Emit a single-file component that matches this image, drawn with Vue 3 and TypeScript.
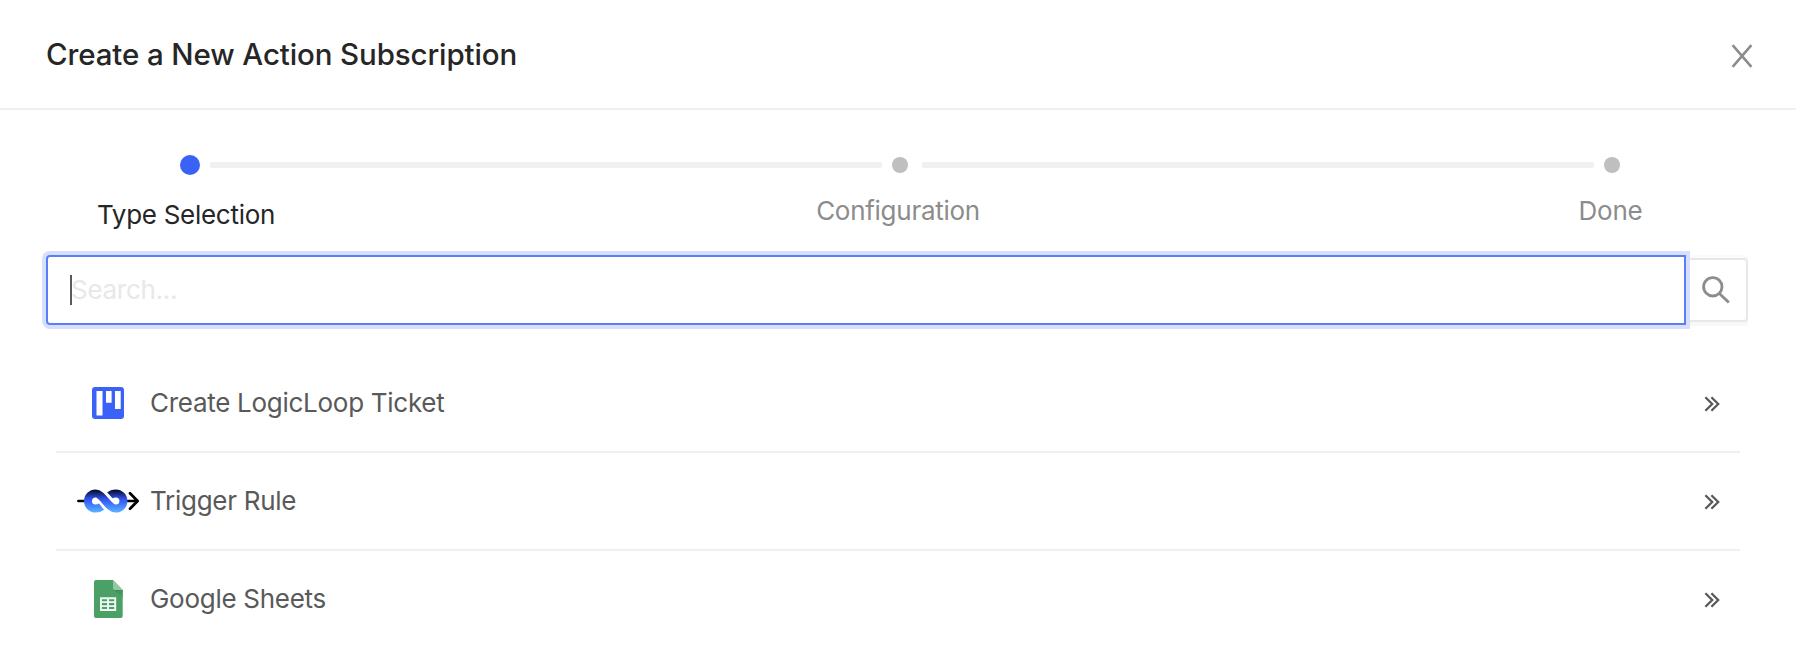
<script setup lang="ts">
import { ref } from 'vue'

interface Step {
  title: string
  key: string
}

interface ActionType {
  label: string
  icon: 'board' | 'loop' | 'sheet'
}

const steps: Step[] = [
  { title: 'Type Selection', key: 'type' },
  { title: 'Configuration', key: 'config' },
  { title: 'Done', key: 'done' },
]
const current = ref(0)

const actions: ActionType[] = [
  { label: 'Create LogicLoop Ticket', icon: 'board' },
  { label: 'Trigger Rule', icon: 'loop' },
  { label: 'Google Sheets', icon: 'sheet' },
]
</script>

<template>
  <div class="modal">
    <header class="header">
      <h1 class="title">Create a New Action Subscription</h1>
      <button class="close" aria-label="Close">
        <svg width="22" height="24" viewBox="0 0 22 24"><path d="M1.6 1.2 20.4 22.8M20.4 1.2 1.6 22.8" /></svg>
      </button>
    </header>

    <div class="steps">
      <div v-for="(s, i) in steps" :key="s.key" class="step" :class="[s.key, { active: i === current }]">
        <div class="rail">
          <span class="dot"></span>
          <span v-if="i < steps.length - 1" class="track"></span>
        </div>
        <div class="label"><span>{{ s.title }}</span></div>
      </div>
    </div>

    <div class="search">
      <div class="field">
        <span class="caret"></span>
        <span class="placeholder">Search...</span>
      </div>
      <button class="go" aria-label="Search">
        <svg width="28" height="28" viewBox="0 0 28 28"><circle cx="10.8" cy="10.8" r="9.2" /><path d="M17.4 17.4 26.8 26.6" /></svg>
      </button>
    </div>

    <ul class="list">
      <li v-for="a in actions" :key="a.label" class="row">
        <span class="icon">
          <svg v-if="a.icon === 'board'" width="32" height="32" viewBox="0 0 32 32">
            <rect width="32" height="32" rx="3.2" fill="#3a62f6" />
            <path d="M4.5 4h6v24.5h-6zM14 4h5.6v11.8H14zM23 4h5.7v18H23z" fill="#fff" />
          </svg>
          <svg v-else-if="a.icon === 'loop'" width="62" height="24" viewBox="0 0 62 24">
            <defs>
              <linearGradient id="loopFill" gradientUnits="userSpaceOnUse" x1="0" y1="0" x2="0" y2="24">
                <stop offset="0.04" stop-color="#060a2c" />
                <stop offset="0.4" stop-color="#2f50e6" />
                <stop offset="0.62" stop-color="#3f74fb" />
                <stop offset="1" stop-color="#5cb8ff" />
              </linearGradient>
            </defs>
            <path d="M1.4 12H8M51 12h9.2M53 4.2l7.6 7.8-7.6 7.8" fill="none" stroke="#000" stroke-width="2.7" stroke-linecap="round" stroke-linejoin="round" />
            <path d="M24.5 17.6C22.6 19.2 20.8 19.6 18.6 19.6A7.6 7.6 0 1 1 18.6 4.4C25.7 4.4 31.2 19.6 38.8 19.6A7.6 7.6 0 1 0 38.8 4.4C36.5 4.4 34.6 5 32.8 6.6" fill="none" stroke="url(#loopFill)" stroke-width="8" />
            <path d="M20 11.2 28 20.5M29.6 3.8l7.2 7.6" fill="none" stroke="#fff" stroke-width="1" />
          </svg>
          <svg v-else width="29" height="38" viewBox="0 0 29 38">
            <defs>
              <linearGradient id="fold" x1="0" y1="0" x2="0.6" y2="1">
                <stop offset="0" stop-color="#388755" />
                <stop offset="1" stop-color="#4b9f65" />
              </linearGradient>
            </defs>
            <path d="M2 0h17l9.7 10v26a2 2 0 0 1-2 2H2a2 2 0 0 1-2-2V2a2 2 0 0 1 2-2z" fill="#4ba165" />
            <path d="m19.8 9.5 8.9 8.8V10z" fill="url(#fold)" />
            <path d="M19 0v8a2 2 0 0 0 2 2h7.7z" fill="#93c7a4" />
            <path d="M6 17.2h16.2V31H6zM7.9 19.2v2.1h5.2v-2.1zM15 19.2v2.1h5.2v-2.1zM7.9 23v2.2h5.2V23zM15 23v2.2h5.2V23zM7.9 26.9V29h5.2v-2.1zM15 26.9V29h5.2v-2.1z" fill="#f1f8f3" fill-rule="evenodd" />
          </svg>
        </span>
        <span class="name">{{ a.label }}</span>
        <svg class="more" width="16" height="16" viewBox="0 0 16 16"><path d="m1.4 1.2 6.8 6.8-6.8 6.8M7.4 1.2 14.2 8l-6.8 6.8" /></svg>
      </li>
    </ul>
  </div>
</template>

<style>
body {
  background: #fff;
}
</style>

<style scoped>
.modal {
  box-sizing: border-box;
  height: 652px;
  overflow: hidden;
  background: #fff;
  font-family: Inter, 'Liberation Sans', sans-serif;
  font-size: 26px;
  letter-spacing: -0.28px;
  color: #595959;
}
button {
  padding: 0;
  background: none;
  border: 0;
}
svg {
  display: block;
}
.header {
  box-sizing: border-box;
  height: 110px;
  padding: 0 43px 0 46px;
  border-bottom: 2px solid #f0f0f0;
  display: flex;
  align-items: center;
  justify-content: space-between;
}
.title {
  margin: 0;
  font-size: 29.5px;
  line-height: 44px;
  font-weight: 500;
  letter-spacing: -0.12px;
  color: #262626;
}
.close {
  margin-top: 4px;
}
.close path {
  fill: none;
  stroke: #8c8c8c;
  stroke-width: 2.6;
}
.steps {
  display: flex;
  height: 141px;
  padding: 45px 0 0 90px;
  box-sizing: border-box;
}
.step {
  width: 711px;
  flex: none;
}
.step.type {
  width: 710px;
}
.step.done {
  width: 200px;
}
.rail {
  display: flex;
  align-items: center;
  height: 20px;
  padding-left: 92px;
}
.step.active .rail {
  padding-left: 90px;
}
.step.done .rail {
  padding-left: 93px;
}
.dot {
  flex: none;
  width: 16px;
  height: 16px;
  border-radius: 50%;
  background: #bfbfbf;
}
.active .dot {
  width: 20px;
  height: 20px;
  background: #3a62f6;
}
.track {
  flex: none;
  width: 672px;
  height: 6px;
  margin-left: 14px;
  border-radius: 2px;
  background: #f0f0f0;
}
.active .track {
  margin-left: 10px;
}
.label {
  width: 196px;
  margin-top: 16px;
  line-height: 40px;
  text-align: center;
  color: #8c8c8c;
  white-space: nowrap;
}
.done .label {
  width: 199px;
}
.active .label {
  margin-top: 20px;
  width: 192px;
  color: #262626;
}
.search {
  display: flex;
  align-items: center;
  height: 78px;
  padding: 0 48px 0 46px;
}
.field {
  position: relative;
  z-index: 1;
  box-sizing: border-box;
  width: 1640px;
  height: 70px;
  padding-left: 22px;
  border: 2px solid #597ef7;
  border-radius: 4px 0 0 4px;
  box-shadow: 0 0 0 4px #d8dffd;
  background: #fff;
  display: flex;
  align-items: center;
}
.caret {
  width: 2px;
  height: 30px;
  background: #595959;
}
.placeholder {
  margin-left: -1px;
  padding-bottom: 2px;
  color: #e8e8e8;
}
.go {
  box-sizing: border-box;
  width: 64px;
  height: 64px;
  margin-left: -2px;
  border: 2px solid #e8e8e8;
  border-radius: 0 4px 4px 0;
  box-shadow: 0 -3px 0 #fafafa, 0 4px 0 #f8f8f8;
  display: flex;
  align-items: center;
  justify-content: center;
}
.go path,
.go circle {
  fill: none;
  stroke: #8c8c8c;
  stroke-width: 2.8;
}
.list {
  list-style: none;
  margin: 26px 56px 0;
  padding: 0;
}
.row {
  box-sizing: border-box;
  height: 98px;
  padding: 0 20px;
  border-bottom: 2px solid #f0f0f0;
  display: flex;
  align-items: center;
}
.row:last-child {
  border-color: transparent;
}
.icon {
  width: 64px;
  margin-right: 10px;
  display: flex;
  justify-content: center;
}
.name {
  flex: 1;
  padding-bottom: 1px;
}
.more {
  margin-top: 1px;
}
.more path {
  fill: none;
  stroke: #595959;
  stroke-width: 2.3;
}
</style>
